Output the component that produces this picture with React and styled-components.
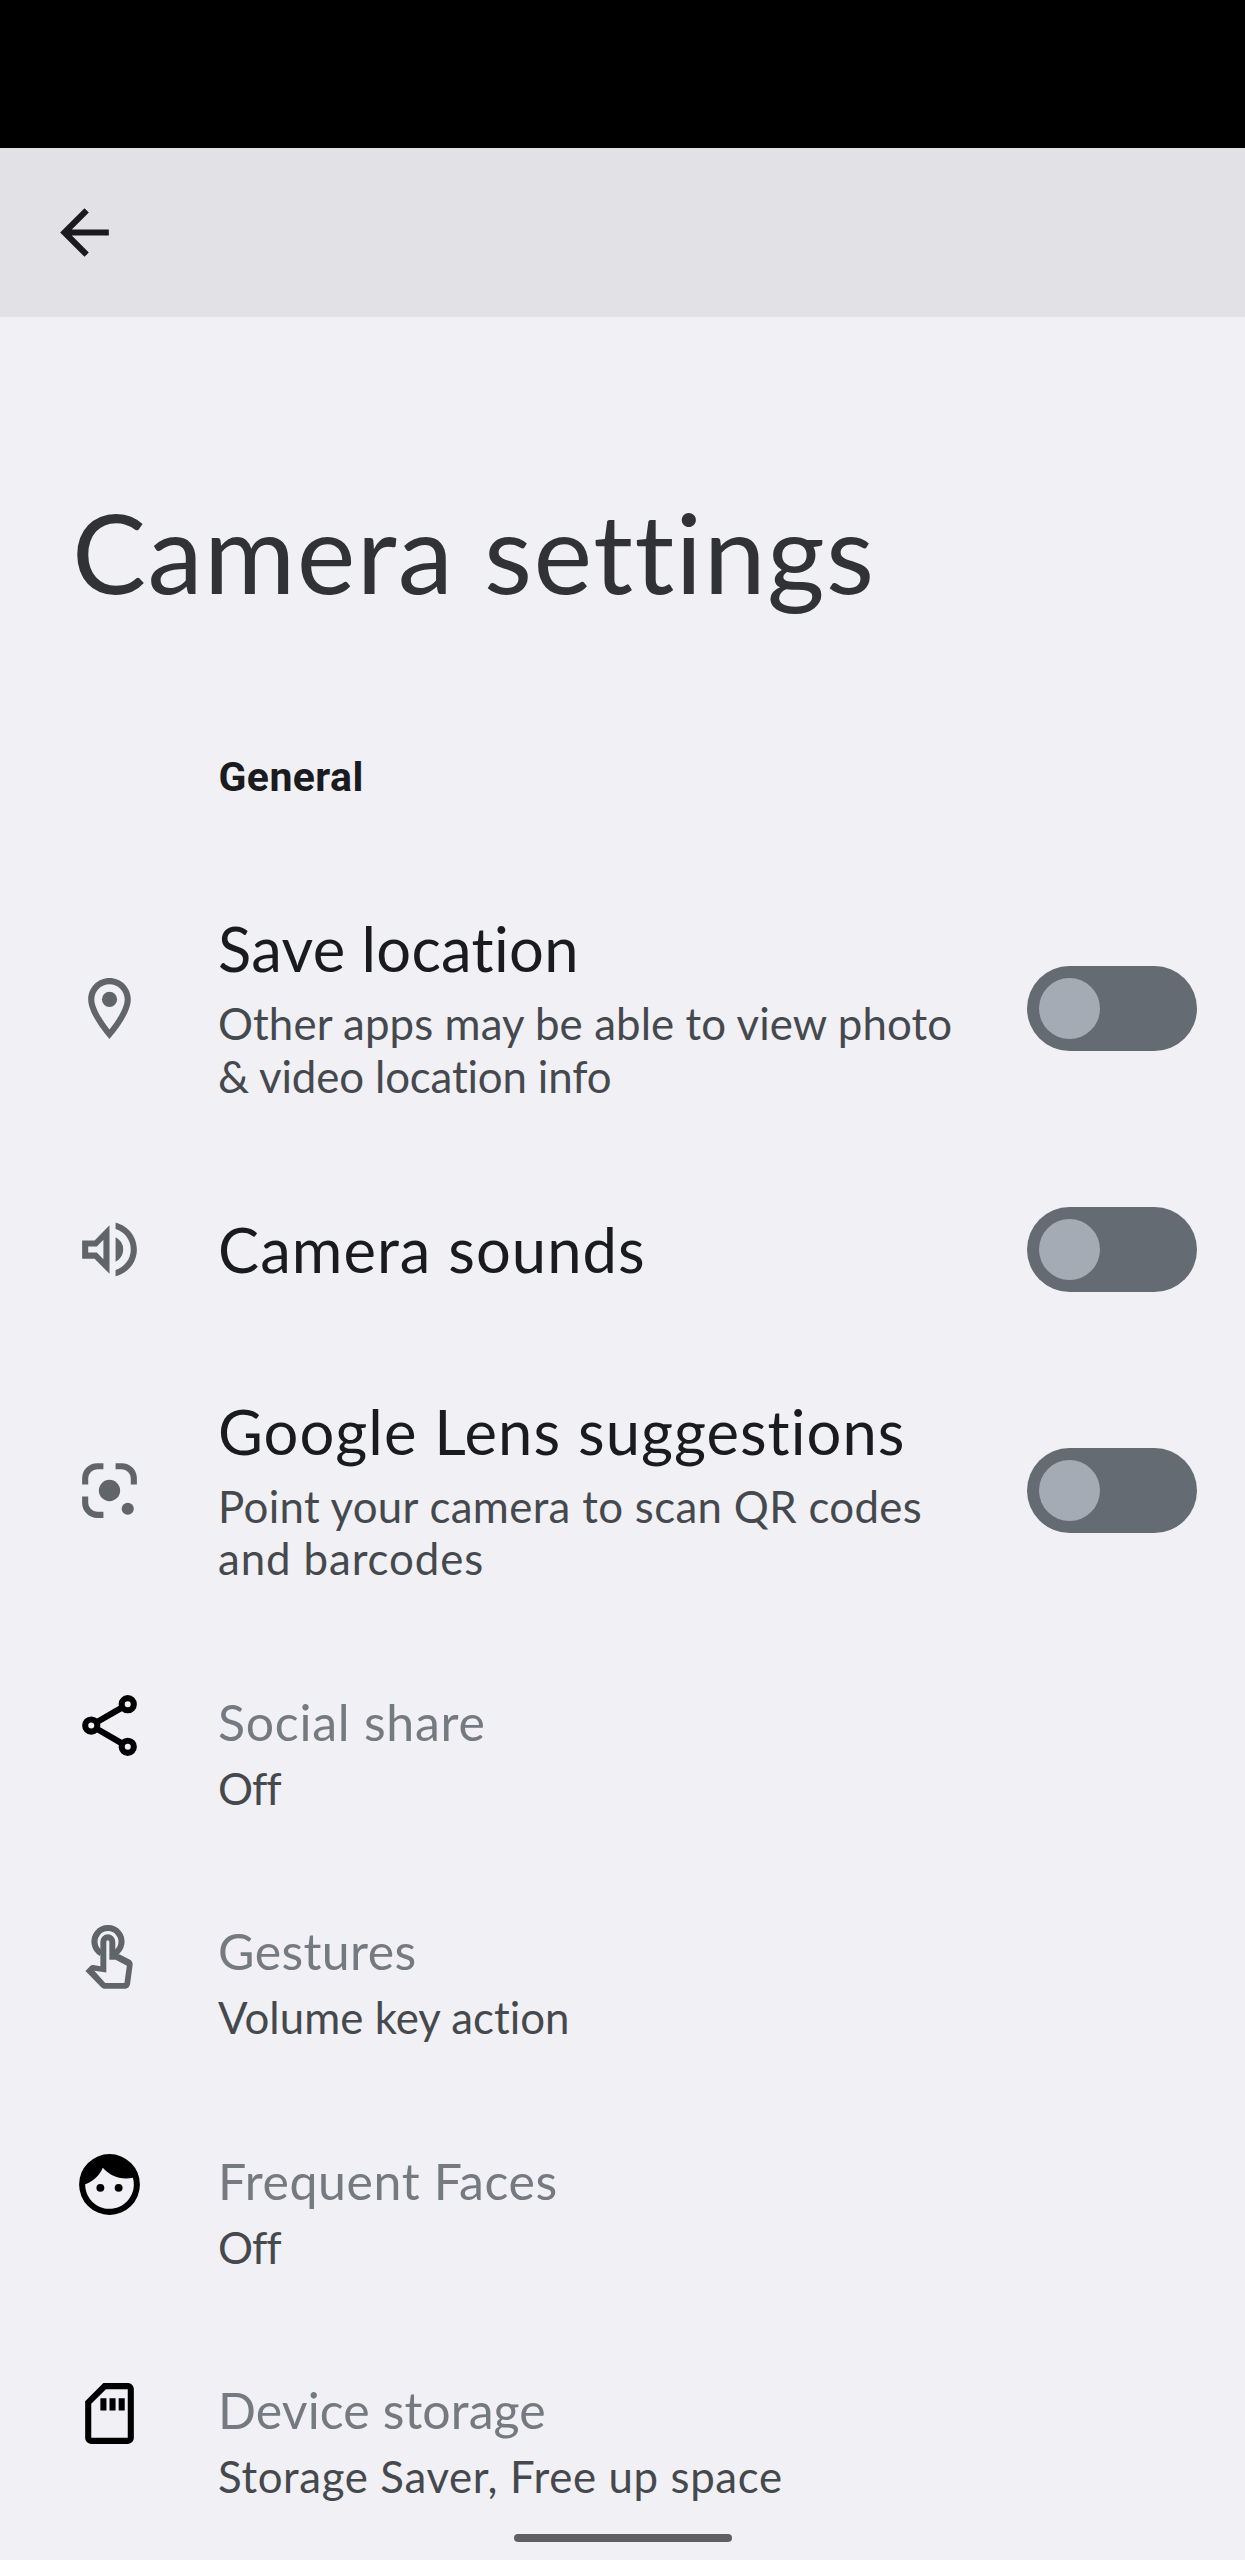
import React from "react";
import styled, { createGlobalStyle } from "styled-components";

const GlobalStyle = createGlobalStyle`
  * { box-sizing: border-box; }
  body { margin: 0; background: #f0f0f5; }
`;

const Screen = styled.div`
  display: flex;
  flex-direction: column;
  width: 100%;
  max-width: 1245px;
  height: 2560px;
  overflow: hidden;
  background: #f0f0f5;
  font-family: "Lato", "Open Sans", sans-serif;
`;

const StatusBar = styled.div`
  flex: none;
  height: 148px;
  background: #000;
`;

const AppBar = styled.header`
  flex: none;
  display: flex;
  align-items: center;
  height: 169px;
  padding-left: 48px;
  background: #e2e1e6;
`;

const BackButton = styled.button`
  display: flex;
  padding: 0;
  border: 0;
  background: none;
  color: #1b1b1f;
`;

const PageTitle = styled.h1`
  flex: none;
  margin: 169px 0 0 72px;
  font-size: 111px;
  font-weight: 400;
  line-height: 130px;
  letter-spacing: 1.4px;
  color: #303236;
`;

const SectionLabel = styled.h2`
  flex: none;
  margin: 137px 0 86.7px 218.5px;
  font-family: "Roboto", sans-serif;
  font-size: 41px;
  font-weight: 700;
  line-height: 48px;
  letter-spacing: 0.4px;
  color: #1b1b1f;
`;

const List = styled.ul`
  flex: none;
  display: flex;
  flex-direction: column;
  margin: 0;
  padding: 0;
  list-style: none;
`;

const Row = styled.li`
  display: grid;
  grid-template-columns: 73px 1fr auto;
  column-gap: 72.5px;
  align-items: center;
  height: ${(p) => (p.$compact ? "229.2px" : "241.2px")};
  padding: 0 48px 0 72.5px;
`;

const IconSlot = styled.span`
  display: flex;
  color: ${(p) => (p.$dark ? "#000" : "#616569")};
`;

const Glyph = styled.svg`
  display: block;
  width: 73px;
  height: 73px;
  fill: currentColor;
`;

const Copy = styled.div`
  display: flex;
  flex-direction: column;
  gap: ${(p) => (p.$compact ? "10px" : "15px")};
  align-self: ${(p) => (p.$compact ? "start" : "center")};
  padding-top: ${(p) => (p.$compact ? "81px" : "0")};
  white-space: nowrap;
`;

const RowTitle = styled.div`
  font-size: ${(p) => (p.$compact ? "50px" : "61.5px")};
  line-height: ${(p) => (p.$compact ? "60px" : "68px")};
  letter-spacing: ${(p) => p.$spacing}px;
  color: ${(p) => (p.$compact ? "#757a80" : "#1a1b1f")};
`;

const Summary = styled.div`
  display: flex;
  flex-direction: column;
  color: #45494e;
`;

const SummaryLine = styled.span`
  font-size: 43.8px;
  line-height: 52.4px;
  letter-spacing: ${(p) => p.$spacing}px;
`;

const Switch = styled.button`
  display: flex;
  align-items: center;
  width: 170px;
  height: 85px;
  padding: 0 12px;
  border: 0;
  border-radius: 43px;
  background: #646b72;
`;

const Thumb = styled.span`
  width: 61px;
  height: 61px;
  border-radius: 50%;
  background: #a5abb4;
`;

const NavHandle = styled.div`
  flex: none;
  align-self: center;
  width: 218px;
  height: 7.5px;
  margin-top: 6.4px;
  border-radius: 4px;
  background: #606064;
`;

const BackIcon = () => (
  <Glyph viewBox="0 0 24 24">
    <path d="M20 11H7.83l5.59-5.59L12 4l-8 8 8 8 1.41-1.41L7.83 13H20v-2z" />
  </Glyph>
);

const icons = {
  place: (
    <>
      <path d="M12 2C8.13 2 5 5.13 5 9c0 5.25 7 13 7 13s7-7.75 7-13c0-3.87-3.13-7-7-7zM7 9c0-2.76 2.24-5 5-5s5 2.24 5 5c0 2.88-2.88 7.19-5 9.88C9.92 16.21 7 11.85 7 9z" />
      <circle cx="12" cy="9" r="2.5" />
    </>
  ),
  volume: (
    <>
      <path d="M12 4 7.1 9H3v6h4.1l4.9 5V4zm-2 4.83v6.34L7.83 13H5v-2h2.83L10 8.83z" />
      <path d="M14 7.97v8.05c1.48-.73 2.5-2.25 2.5-4.02A4.5 4.5 0 0 0 14 7.97zM14 3.23v2.06c2.89.86 5 3.54 5 6.71s-2.11 5.85-5 6.71v2.06c4.01-.91 7-4.49 7-8.77s-2.99-7.86-7-8.77z" />
    </>
  ),
  lens: (
    <>
      <path
        d="M4 10V8a4 4 0 0 1 4-4h2M14 4h2a4 4 0 0 1 4 4v2M4 14v2a4 4 0 0 0 4 4h2"
        fill="none"
        stroke="currentColor"
        strokeWidth="2"
      />
      <circle cx="12" cy="12" r="3.5" />
      <circle cx="18" cy="18" r="2" />
    </>
  ),
  share: (
    <g fill="none" stroke="currentColor" strokeWidth="2">
      <path d="M16.3 6 7.7 11M7.7 13l8.6 5" />
      <circle cx="18" cy="5" r="2" />
      <circle cx="6" cy="12" r="2" />
      <circle cx="18" cy="19" r="2" />
    </g>
  ),
  touch: (
    <>
      <path
        d="M9.3 11.3a4.45 4.45 0 1 1 4.4 0"
        fill="none"
        stroke="currentColor"
        strokeWidth="2"
      />
      <path
        fillRule="evenodd"
        d="M9 7.5a2.45 2.45 0 0 1 4.9 0v3.9l1.5.3 3.2 1.6c.8.4 1.1 1.1 1 1.9l-.8 5.9c-.1 1.1-.8 1.8-1.8 1.8H10.5c-.5 0-.9-.2-1.2-.5L4.1 17.1l1.5-1.6c.3-.3.7-.4 1.1-.35L9 15.5zM10.95 7.5a.5.5 0 0 1 1 0v5.9H14l3.7 2-.8 5.6h-6.3L7 17l3.95.6z"
      />
    </>
  ),
  face: (
    <>
      <path
        fillRule="evenodd"
        d="M12 2a10 10 0 1 0 0 20 10 10 0 0 0 0-20zm0 18c-4.41 0-8-3.59-8-8.1 2.4-.75 4.8-2.9 5.8-5.4 2.2 2.5 5.6 4.1 9.9 3.3.2.7.3 1.45.3 2.2 0 4.41-3.59 8-8 8z"
      />
      <circle cx="9" cy="13.1" r="1.3" />
      <circle cx="15" cy="13.1" r="1.3" />
    </>
  ),
  sdCard: (
    <path
      fillRule="evenodd"
      d="M18 2h-8L4 8v12c0 1.1.9 2 2 2h12c1.1 0 2-.9 2-2V4c0-1.1-.9-2-2-2zm0 18H6V8.83L10.83 4H18v16zM9 7h2v4H9zM12 7h2v4h-2zM15 7h2v4h-2z"
    />
  ),
};

const settings = [
  {
    icon: "place",
    title: ["Save location", 0.3],
    lines: [
      ["Other apps may be able to view photo", 0.1],
      ["& video location info", -0.15],
    ],
    toggle: true,
  },
  { icon: "volume", title: ["Camera sounds", 1.05], lines: [], toggle: true },
  {
    icon: "lens",
    title: ["Google Lens suggestions", 1.05],
    lines: [
      ["Point your camera to scan QR codes", 0.33],
      ["and barcodes", 0.9],
    ],
    toggle: true,
  },
  { icon: "share", dark: true, title: ["Social share", 0.75], lines: [["Off", -1]] },
  { icon: "touch", title: ["Gestures", 0.4], lines: [["Volume key action", 0.05]] },
  { icon: "face", dark: true, title: ["Frequent Faces", 0.6], lines: [["Off", -1]] },
  {
    icon: "sdCard",
    dark: true,
    title: ["Device storage", 0.1],
    lines: [["Storage Saver, Free up space", 0.63]],
  },
];

function SettingRow({ icon, dark, title, lines, toggle }) {
  const compact = !toggle;
  return (
    <Row $compact={compact}>
      <IconSlot $dark={dark}>
        <Glyph viewBox="0 0 24 24">{icons[icon]}</Glyph>
      </IconSlot>
      <Copy $compact={compact}>
        <RowTitle $compact={compact} $spacing={title[1]}>
          {title[0]}
        </RowTitle>
        {lines.length > 0 && (
          <Summary>
            {lines.map(([text, spacing]) => (
              <SummaryLine key={text} $spacing={spacing}>
                {text}
              </SummaryLine>
            ))}
          </Summary>
        )}
      </Copy>
      {toggle && (
        <Switch role="switch" aria-checked="false" aria-label={title[0]}>
          <Thumb />
        </Switch>
      )}
    </Row>
  );
}

export default function App() {
  return (
    <Screen>
      <GlobalStyle />
      <StatusBar />
      <AppBar>
        <BackButton aria-label="Back">
          <BackIcon />
        </BackButton>
      </AppBar>
      <PageTitle>Camera settings</PageTitle>
      <SectionLabel>General</SectionLabel>
      <List>
        {settings.map((s) => (
          <SettingRow key={s.title[0]} {...s} />
        ))}
      </List>
      <NavHandle />
    </Screen>
  );
}
